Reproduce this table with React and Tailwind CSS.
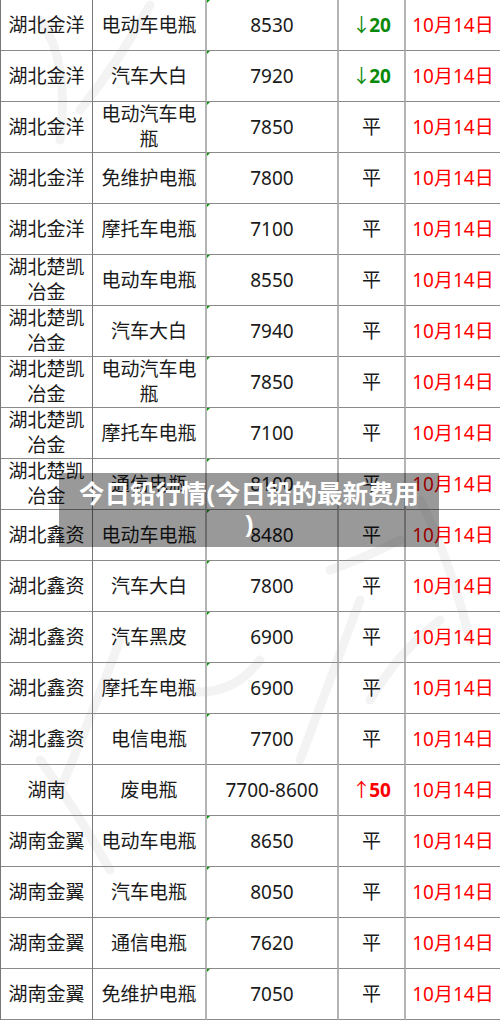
import React from "react";

const rows = [
  ["湖北金洋", "电动车电瓶", "8530", "down20"],
  ["湖北金洋", "汽车大白", "7920", "down20"],
  ["湖北金洋", "电动汽车电瓶", "7850", "平"],
  ["湖北金洋", "免维护电瓶", "7800", "平"],
  ["湖北金洋", "摩托车电瓶", "7100", "平"],
  ["湖北楚凯冶金", "电动车电瓶", "8550", "平"],
  ["湖北楚凯冶金", "汽车大白", "7940", "平"],
  ["湖北楚凯冶金", "电动汽车电瓶", "7850", "平"],
  ["湖北楚凯冶金", "摩托车电瓶", "7100", "平"],
  ["湖北楚凯冶金", "通信电瓶", "8100", "平"],
  ["湖北鑫资", "电动车电瓶", "8480", "平"],
  ["湖北鑫资", "汽车大白", "7800", "平"],
  ["湖北鑫资", "汽车黑皮", "6900", "平"],
  ["湖北鑫资", "摩托车电瓶", "6900", "平"],
  ["湖北鑫资", "电信电瓶", "7700", "平"],
  ["湖南", "废电瓶", "7700-8600", "up50"],
  ["湖南金翼", "电动车电瓶", "8650", "平"],
  ["湖南金翼", "汽车电瓶", "8050", "平"],
  ["湖南金翼", "通信电瓶", "7620", "平"],
  ["湖南金翼", "免维护电瓶", "7050", "平"],
];

const cell =
  "flex items-center justify-center text-center border-b border-b-[#8a8a8a] h-[51px] leading-[25px]";

const Change = ({ value }) => {
  if (value === "down20")
    return (
      <span className="text-[#0a8a0a] tracking-[-2px]">
        <span className="font-normal">↓</span>
        <span className="font-bold tracking-normal">20</span>
      </span>
    );
  if (value === "up50")
    return (
      <span className="text-[#ff0000] tracking-[-2px]">
        <span className="font-normal">↑</span>
        <span className="font-bold tracking-normal">50</span>
      </span>
    );
  return <span>{value}</span>;
};

const Watermark = () => (
  <svg
    className="absolute inset-0 pointer-events-none"
    width="500"
    height="1020"
    viewBox="0 0 500 1020"
  >
    <g fill="none" stroke="#f3f3f3" strokeWidth="9" strokeLinecap="round">
      <path d="M40 20 Q70 60 60 140" />
      <path d="M150 5 Q120 60 80 110" />
      <path d="M420 500 Q450 560 470 640" />
      <path d="M360 600 Q330 680 300 760" />
      <path d="M260 660 Q230 700 180 690" />
      <path d="M120 640 Q90 720 60 790" />
      <path d="M40 760 Q70 800 110 870" />
      <path d="M440 620 Q400 650 370 700" />
      <path d="M330 570 Q360 560 400 540" />
    </g>
  </svg>
);

export default function App() {
  return (
    <div
      className="relative w-[500px] h-[1020px] overflow-hidden bg-white text-[19px] text-[#1a1a1a]"
      style={{ fontFamily: '"Noto Sans", "Noto Sans CJK SC", sans-serif' }}
    >
      <Watermark />
      <div className="relative grid grid-cols-[92px_114px_132px_67px_95px] border-l border-l-[#777]">
        {rows.map((r, i) => (
          <React.Fragment key={i}>
            <div className={`${cell} border-r border-r-[#777] px-1`}>{r[0]}</div>
            <div className={`${cell} border-r-2 border-r-[#b4b4b4] px-0`}>{r[1]}</div>
            <div className={`${cell} relative border-r-2 border-r-[#b4b4b4]`}>
              {r[3] !== "up50" && (
                <span className="absolute left-0 top-0 w-0 h-0 border-t-[3px] border-r-[3px] border-t-[#0a9a0a] border-r-transparent" />
              )}
              {r[2]}
            </div>
            <div className={`${cell} border-r-2 border-r-[#b4b4b4]`}>
              <Change value={r[3]} />
            </div>
            <div className={`${cell} border-r border-r-[#666] text-[#ff0000]`}>10月14日</div>
          </React.Fragment>
        ))}
      </div>
      <div className="absolute left-[59px] top-[473px] w-[380px] h-[74px] bg-black/40 pt-[5px] text-center text-white font-bold text-[25.5px] leading-[30px] whitespace-nowrap">
        今日铅行情(今日铅的最新费用
        <br />)
      </div>
    </div>
  );
}
